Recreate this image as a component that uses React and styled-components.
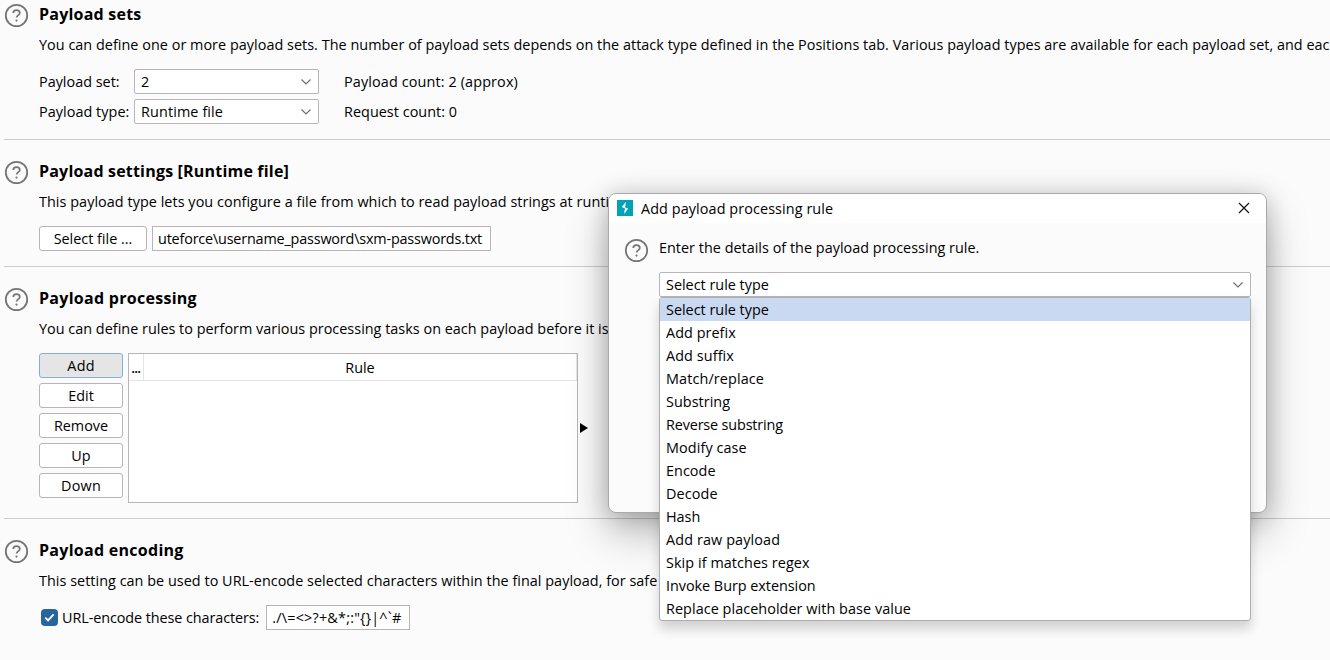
import React from "react";
import styled, { createGlobalStyle, css } from "styled-components";

const GlobalStyle = createGlobalStyle`
  *, *::before, *::after { box-sizing: border-box; }
  body {
    margin: 0;
    background: #fbfbfb;
    color: #000;
    font: 14.4px/20px "Open Sans", "Noto Sans", sans-serif;
    overflow: hidden;
  }
`;

const Page = styled.main`
  position: relative;
  width: 1330px;
  height: 660px;
  overflow: hidden;
  background: #fbfbfb;
`;

const Text = styled.span`
  white-space: nowrap;
  letter-spacing: ${(p) => p.$track || 0}px;
`;

const Panel = styled.section`
  display: grid;
  grid-template-columns: 35px 1fr;
  margin-left: 4px;
  padding: ${(p) => (p.$first ? 1 : 18)}px 0 15px;
  border-bottom: ${(p) => (p.$last ? "none" : "1px solid #cdcdcd")};
`;

const HelpSvg = styled.svg`
  display: block;
  width: 25px;
  height: 25px;
  margin-top: 2px;
`;

const PanelTitle = styled.h2`
  margin: 0 0 8px;
  font-size: 16px;
  font-weight: 700;
  line-height: 26px;
  white-space: nowrap;
  letter-spacing: ${(p) => p.$track}px;
`;

const Description = styled.p`
  margin: 0 0 14px;
  height: 20px;
  white-space: nowrap;
  letter-spacing: ${(p) => p.$track}px;
`;

const SetGrid = styled.div`
  display: grid;
  grid-template-columns: 95px 185px auto;
  row-gap: 5px;
  align-items: center;
`;

const Count = styled(Text)`
  padding-left: 25px;
`;

const box = css`
  height: 25px;
  background: #fff;
  border: 1px solid #b9b5b7;
  line-height: 23px;
`;

const SelectBox = styled.div`
  ${box}
  display: flex;
  align-items: center;
  justify-content: space-between;
  padding: 0 6px 0 6px;
  border-radius: 2px;
`;

const Field = styled.div`
  ${box}
  width: ${(p) => p.$w}px;
  margin-left: ${(p) => p.$gap}px;
  padding-left: 5px;
  overflow: hidden;
`;

const Button = styled.button`
  ${box}
  display: block;
  width: ${(p) => p.$w}px;
  padding: 0;
  border-radius: 3px;
  font-family: inherit;
  font-size: inherit;
  color: inherit;
  letter-spacing: ${(p) => p.$track || 0}px;
  ${(p) => p.$active && css`
    background: #e5e5e5;
    border-color: #86aedb;
  `}
`;

const Line = styled.div`
  display: flex;
  align-items: center;
`;

const Processing = styled.div`
  display: flex;
  gap: 5px;
`;

const ButtonColumn = styled.div`
  display: flex;
  flex-direction: column;
  gap: 5px;
`;

const Table = styled.div`
  width: 450px;
  height: 150px;
  background: #fff;
  border: 1px solid #b9b5b7;
`;

const TableHead = styled.div`
  display: grid;
  grid-template-columns: 15px 1fr;
  height: 27px;
  border-bottom: 1px solid #e4e4e4;
`;

const HeadCell = styled.div`
  height: 26px;
  border-right: 1px solid #e4e4e4;
  line-height: 27px;
  text-align: center;
`;

const EllipsisCell = styled(HeadCell)`
  font-size: 11.5px;
  font-weight: 700;
  line-height: 30px;
  letter-spacing: -0.3px;
`;

const ExpandSvg = styled.svg`
  width: 8px;
  height: 10px;
  margin: 70px 0 0 -3px;
`;

const Checkbox = styled.span`
  display: grid;
  place-items: center;
  width: 17px;
  height: 17px;
  margin: 0 4px 0 2px;
  border-radius: 4px;
  background: #2765a0;
`;

const Dialog = styled.div`
  position: absolute;
  left: 608px;
  top: 193px;
  width: 659px;
  height: 320px;
  border: 1px solid #aaa;
  border-radius: 8px;
  background: #fbfbfb;
  box-shadow: 0 20px 42px rgba(0, 0, 0, 0.26), 0 2px 24px rgba(0, 0, 0, 0.2);
`;

const TitleBar = styled.header`
  display: flex;
  align-items: center;
  gap: 8px;
  height: 29px;
  padding: 0 16px 0 8px;
  border-radius: 7px 7px 0 0;
  background: #fff;

  > svg { margin-bottom: 1px; }
`;

const CloseSvg = styled.svg`
  width: 12px;
  height: 12px;
  margin-left: auto;
`;

const DialogBody = styled.div`
  display: grid;
  grid-template-columns: 35px 592px;
  padding: 13px 0 0 15px;
`;

const DialogText = styled.p`
  margin: 2px 0 14px;
  height: 20px;
  white-space: nowrap;
  letter-spacing: 0.02px;
`;

const RuleSelect = styled.div`
  position: relative;
`;

const Menu = styled.ul`
  position: absolute;
  top: 25px;
  left: 0;
  right: 0;
  margin: 0;
  padding: 0;
  list-style: none;
  background: #fff;
  border: 1px solid #aeaeae;
  border-radius: 3px;
  box-shadow: 0 8px 12px rgba(0, 0, 0, 0.17);
`;

const MenuItem = styled.li`
  height: 23px;
  padding-left: 6px;
  line-height: 23px;
  white-space: nowrap;
  letter-spacing: ${(p) => p.$track || 0}px;
  background: ${(p) => (p.$selected ? "#c9d9f1" : "transparent")};
`;

const Help = () => (
  <HelpSvg viewBox="0 0 25 25" fill="none" stroke="#757575">
    <circle cx="12.5" cy="12.5" r="10.7" strokeWidth="1.8" />
    <path d="M9.3 10.1C9.3 8.2 10.7 7.2 12.5 7.2S15.8 8.3 15.8 10C15.8 12.1 12.7 12.2 12.6 14.5" strokeWidth="1.7" />
    <circle cx="12.5" cy="17.6" r="1.1" fill="#757575" stroke="none" />
  </HelpSvg>
);

const Chevron = () => (
  <svg width="12" height="8" viewBox="0 0 12 8" fill="none" stroke="#6b6b6b" strokeWidth="1.1">
    <path d="M1.5 1.5L6 6L10.5 1.5" />
  </svg>
);

const BurpLogo = () => (
  <svg width="16" height="16" viewBox="0 0 16 16">
    <rect width="16" height="16" fill="#00a2b8" />
    <path d="M8.6 2L4.8 7L7.9 8.6V6.4L8.6 5.4Z" fill="#fff" />
    <path d="M7.9 7.2L11 8.6L7.4 14V10.6L8.1 9.4Z" fill="#fff" />
  </svg>
);

const RULES = [
  ["Select rule type"], ["Add prefix", 0.05], ["Add suffix", 0.1], ["Match/replace", 0.12], ["Substring", 0.05],
  ["Reverse substring", -0.15], ["Modify case", 0.1], ["Encode", 0.05], ["Decode", 0.1], ["Hash"],
  ["Add raw payload", 0.12], ["Skip if matches regex", 0.07], ["Invoke Burp extension", -0.03],
  ["Replace placeholder with base value", 0.06],
];

export default function App() {
  return (
    <Page>
      <GlobalStyle />
      <Panel $first>
        <Help />
        <div>
          <PanelTitle $track={0.22}>Payload sets</PanelTitle>
          <Description $track={0.035}>
            You can define one or more payload sets. The number of payload sets depends on the attack type defined in
            the Positions tab. Various payload types are available for each payload set, and eac
          </Description>
          <SetGrid>
            <Text>Payload set:</Text>
            <SelectBox>2<Chevron /></SelectBox>
            <Count $track={0.13}>Payload count: 2 (approx)</Count>
            <Text $track={0.05}>Payload type:</Text>
            <SelectBox><Text $track={0.12}>Runtime file</Text><Chevron /></SelectBox>
            <Count $track={0.04}>Request count: 0</Count>
          </SetGrid>
        </div>
      </Panel>

      <Panel>
        <Help />
        <div>
          <PanelTitle $track={0.19}>Payload settings [Runtime file]</PanelTitle>
          <Description $track={0.05}>
            This payload type lets you configure a file from which to read payload strings at runtime.
          </Description>
          <Line>
            <Button $w={108}>Select file ...</Button>
            <Field $w={339} $gap={5}><Text $track={-0.18}>uteforce\username_password\sxm-passwords.txt</Text></Field>
          </Line>
        </div>
      </Panel>

      <Panel>
        <Help />
        <div>
          <PanelTitle $track={0.28}>Payload processing</PanelTitle>
          <Description $track={0.018}>
            You can define rules to perform various processing tasks on each payload before it is used.
          </Description>
          <Processing>
            <ButtonColumn>
              <Button $w={84} $active $track={0.2}>Add</Button>
              <Button $w={84}>Edit</Button>
              <Button $w={84}>Remove</Button>
              <Button $w={84}>Up</Button>
              <Button $w={84} $track={0.2}>Down</Button>
            </ButtonColumn>
            <Table>
              <TableHead>
                <EllipsisCell>...</EllipsisCell>
                <HeadCell>Rule</HeadCell>
              </TableHead>
            </Table>
            <ExpandSvg viewBox="0 0 8 10"><path d="M0 0L8 5L0 10Z" /></ExpandSvg>
          </Processing>
        </div>
      </Panel>

      <Panel $last>
        <Help />
        <div>
          <PanelTitle $track={0.28}>Payload encoding</PanelTitle>
          <Description $track={0.036}>
            This setting can be used to URL-encode selected characters within the final payload, for safe
          </Description>
          <Line>
            <Checkbox>
              <svg width="11" height="9" viewBox="0 0 11 9" fill="none" stroke="#fff" strokeWidth="1.8">
                <path d="M1.3 4.6L4.1 7.4L9.6 1.3" />
              </svg>
            </Checkbox>
            <Text $track={-0.08}>URL-encode these characters:</Text>
            <Field $w={144} $gap={7}><Text $track={0.2}>{'./\\=<>?+&*;:"{}|^`#'}</Text></Field>
          </Line>
        </div>
      </Panel>

      <Dialog role="dialog">
        <TitleBar>
          <BurpLogo />
          <Text $track={0.09}>Add payload processing rule</Text>
          <CloseSvg viewBox="0 0 12 12" fill="none" stroke="#111" strokeWidth="1.2">
            <path d="M1 1L11 11M11 1L1 11" />
          </CloseSvg>
        </TitleBar>
        <DialogBody>
          <Help />
          <div>
            <DialogText>Enter the details of the payload processing rule.</DialogText>
            <RuleSelect>
              <SelectBox>Select rule type<Chevron /></SelectBox>
              <Menu>
                {RULES.map(([label, track], i) => (
                  <MenuItem key={label} $track={track} $selected={i === 0}>{label}</MenuItem>
                ))}
              </Menu>
            </RuleSelect>
          </div>
        </DialogBody>
      </Dialog>
    </Page>
  );
}
